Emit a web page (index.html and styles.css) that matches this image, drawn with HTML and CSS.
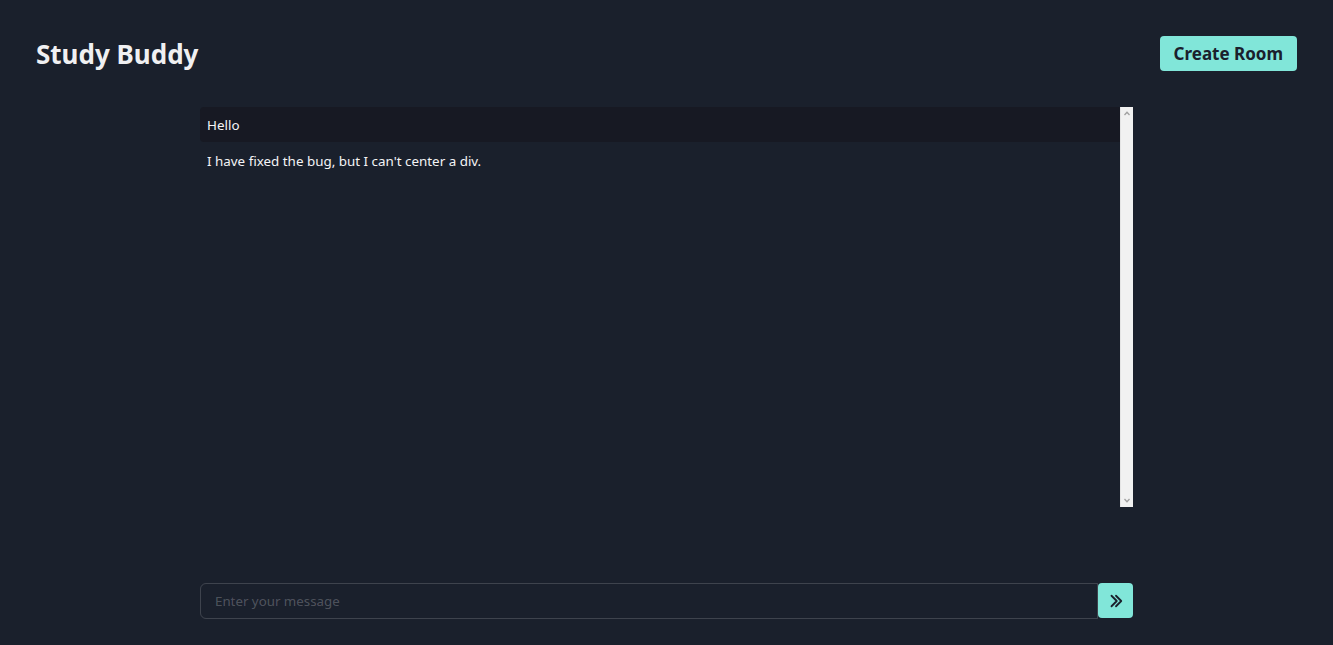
FILE: index.html
```html
<!DOCTYPE html>
<html lang="en">
<head>
<meta charset="utf-8">
<title>Study Buddy</title>
<link rel="stylesheet" href="styles.css">
</head>
<body>
<header class="topbar">
  <h1 class="brand">Study Buddy</h1>
  <button class="create-btn">Create Room</button>
</header>
<main class="chat">
  <div class="messages-frame">
    <div class="messages">
      <div class="msg msg-alt">Hello</div>
      <div class="msg">I have fixed the bug, but I can't center a div.</div>
    </div>
    <div class="scrollbar" aria-hidden="true">
      <svg class="sb-arrow" width="12" height="13" viewBox="0 0 12 13"><path d="M3.5 8 L6 5.2 L8.5 8" fill="none" stroke="#a0a0a0" stroke-width="1.3"/></svg>
      <svg class="sb-arrow" width="12" height="13" viewBox="0 0 12 13"><path d="M3.5 5 L6 7.8 L8.5 5" fill="none" stroke="#a0a0a0" stroke-width="1.3"/></svg>
    </div>
  </div>
  <form class="composer">
    <input class="composer-input" type="text" placeholder="Enter your message">
    <button class="send-btn" type="button" aria-label="Send">
      <svg width="18" height="18" viewBox="0 0 24 24" fill="none" stroke="#1a202c" stroke-width="2.4" stroke-linecap="round" stroke-linejoin="round"><polyline points="6 5 13 12 6 19"/><polyline points="12 5 19 12 12 19"/></svg>
    </button>
  </form>
</main>
</body>
</html>
```
FILE: styles.css
```css
* { box-sizing: border-box; }
html, body {
  margin: 0;
  height: 100%;
  background: #1a202c;
  color: #f4f4f6;
  font-family: "Noto Sans", "Open Sans", sans-serif;
}
.topbar {
  display: flex;
  justify-content: space-between;
  align-items: flex-start;
  padding: 36px 36px 0 36px;
  height: 107px;
}
.brand {
  margin: 0;
  margin-top: 2px;
  font-size: 26px;
  font-weight: 700;
  line-height: 32px;
  color: #f0f0f2;
}
.create-btn {
  background: #81e6d9;
  color: #1a202c;
  border: none;
  border-radius: 4px;
  height: 35px;
  padding: 0 14px;
  font-family: inherit;
  font-size: 17px;
  font-weight: 700;
  cursor: pointer;
}
.chat {
  width: 933px;
  margin: 0 auto;
  display: flex;
  flex-direction: column;
}
.messages-frame {
  display: flex;
  height: 400px;
}
.messages {
  flex: 1;
  overflow: hidden;
}
.scrollbar {
  width: 13px;
  background: #f1f1f1;
  border-left: 1px solid #e4e4e4;
  display: flex;
  flex-direction: column;
  justify-content: space-between;
  align-items: center;
}
.sb-arrow { display: block; }
.msg {
  height: 35px;
  padding: 1px 7px 0;
  display: flex;
  align-items: center;
  font-size: 13.4px;
}
.msg + .msg { padding-top: 3px; }
.msg-alt {
  background: #171923;
  border-radius: 4px 0 0 4px;
}
.composer {
  display: flex;
  margin-top: 76px;
}
.composer-input {
  flex: 1;
  height: 36px;
  background: transparent;
  border: 1px solid rgba(255,255,255,0.16);
  border-radius: 6px 0 0 6px;
  padding: 0 14px;
  color: #f4f4f6;
  font-family: inherit;
  font-size: 13.3px;
  outline: none;
}
.composer-input::placeholder { color: rgba(255,255,255,0.24); }
.send-btn {
  width: 35px;
  height: 35px;
  background: #81e6d9;
  border: none;
  border-radius: 4px;
  display: flex;
  align-items: center;
  justify-content: center;
  padding: 0;
  cursor: pointer;
}
```
